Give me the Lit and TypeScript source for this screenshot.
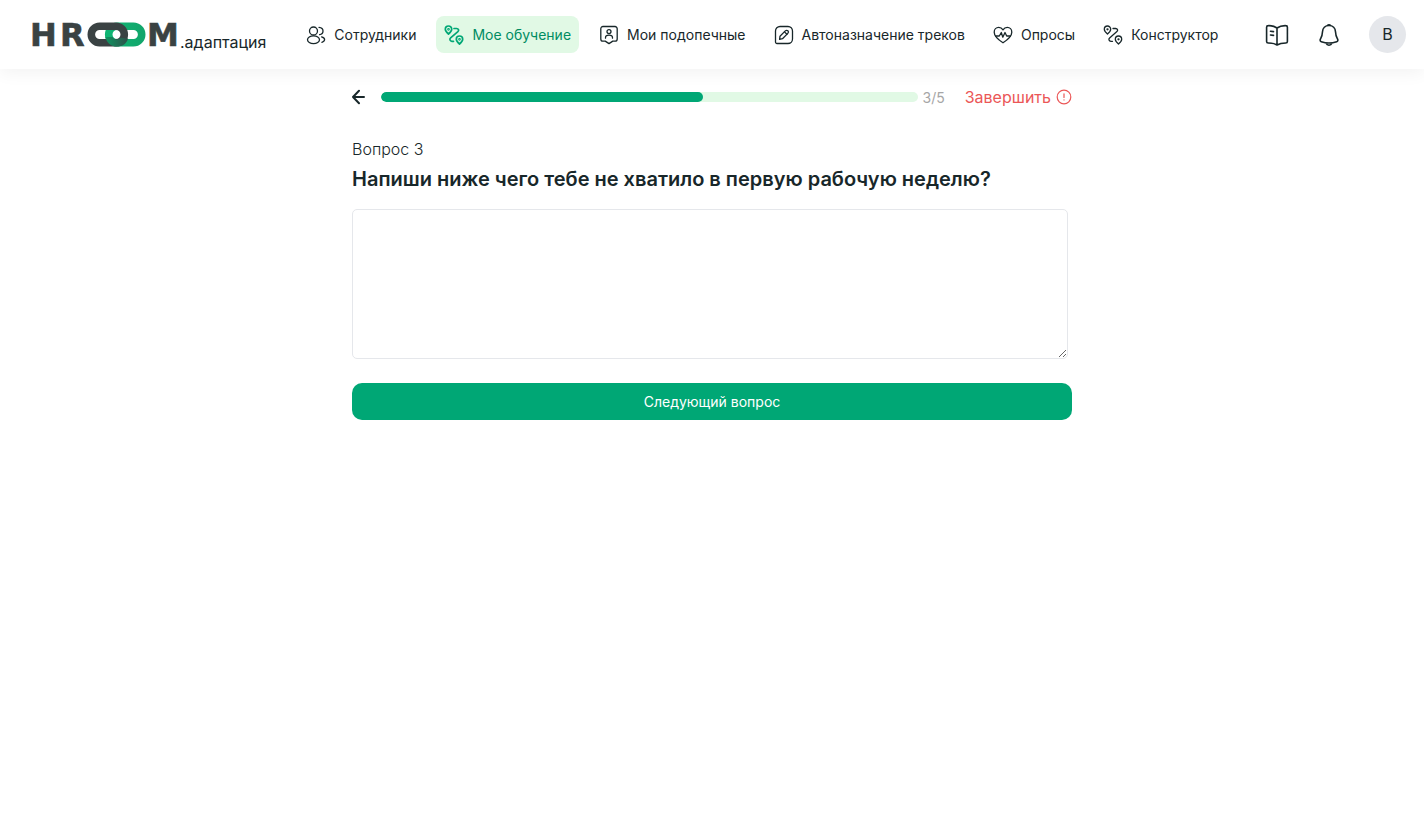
import { LitElement, html, css, svg, nothing } from "lit";
import { customElement, property, state } from "lit/decorators.js";
import { classMap } from "lit/directives/class-map.js";

const route = svg`
  <path d="M4.500 9C2.700 7.400 1.300 6.100 1.300 4.200a3.200 3.200 0 0 1 6.400 0C7.700 6.100 6.300 7.400 4.500 9Z"/>
  <circle cx="4.500" cy="4.300" r="0.500"/>
  <path d="M15.500 19c-1.800-1.600-3.200-2.900-3.200-4.800a3.200 3.200 0 0 1 6.400 0c0 1.900-1.400 3.200-3.200 4.800Z"/>
  <circle cx="15.500" cy="14.300" r="0.500"/>
  <path d="M10 3.500h2.600c1.900 0 2.700 1.900 1.300 3.100l-7.300 6.300c-1.400 1.200-.6 3.400 1.300 3.400h1.600"/>`;

const icons = {
  people: svg`
    <circle cx="7.500" cy="6" r="4"/>
    <ellipse cx="7.500" cy="14.700" rx="6" ry="3.900"/>
    <path d="M13 2.300c2.500.2 4 1.700 4 3.700s-1.400 3.400-3.400 3.600M15.600 11.800c1.900.5 3 1.500 3 2.800s-1 2.200-2.700 2.700"/>`,
  route,
  badge: svg`
    <path d="M4 1.500h12a2.200 2.200 0 0 1 2.200 2.200v10.200a2.200 2.200 0 0 1-2.200 2.200h-2.200L10 18.600l-3.800-2.500H4a2.200 2.200 0 0 1-2.200-2.200V3.700A2.200 2.200 0 0 1 4 1.500Z"/>
    <circle cx="10" cy="6.600" r="2"/>
    <path d="M6.500 13.200v-.5c0-1.500 1.500-2.500 3.500-2.500s3.500 1 3.500 2.500v.5"/>`,
  edit: svg`
    <path d="M6 1.500h8a4.500 4.500 0 0 1 4.500 4.500v8a4.500 4.500 0 0 1-4.500 4.500H3A1.500 1.500 0 0 1 1.500 17V6A4.500 4.500 0 0 1 6 1.500Z"/>
    <path d="m6 11.200 5.300-5.300c.8-.8 1.900-.8 2.600-.1s.7 1.800-.1 2.600L8.500 13.700l-2.900.6Z"/>
    <path d="m10.500 6.900 2.400 2.400"/>`,
  heart: svg`
    <path d="M10 17.800C7 15.800 1.200 11.700 1.200 7.200c0-2.800 2-4.800 4.500-4.800 1.800 0 3.300.9 4.300 2.500 1-1.600 2.500-2.500 4.300-2.500 2.500 0 4.500 2 4.500 4.800 0 4.500-5.800 8.600-8.800 10.600Z"/>
    <path d="M2.500 11h3.800L8.300 7.500l1.500 4.700 2.200-4.700 1.700 3.500h3.800"/>`,
};

type IconName = keyof typeof icons;

@customElement("hr-logo")
class HrLogo extends LitElement {
  static styles = css`
    :host { display: flex; align-items: flex-end; }
    .mark { display: block; width: 148px; height: 26px; overflow: visible; }
    .letters {
      font: 700 32px "DejaVu Sans", sans-serif;
      fill: #3a4243;
      stroke: #3a4243;
      stroke-width: 0.6;
    }
    .product {
      font: 400 16px/20px Inter, sans-serif;
      color: #18272a;
      margin-bottom: -4px;
    }
  `;
  render() {
    return html`
      <svg class="mark" viewBox="0 0 148 26" role="img" aria-label="HROOM">
        <defs>
          <linearGradient id="green" x1="0" x2="1">
            <stop offset="0" stop-color="#0fb573" />
            <stop offset="1" stop-color="#12a66c" />
          </linearGradient>
          <linearGradient id="overlap" x1="0" x2="1">
            <stop offset="0" stop-color="#0e9661" />
            <stop offset="1" stop-color="#2f4f49" />
          </linearGradient>
        </defs>
        <text class="letters" x="-2" y="24">H</text>
        <text class="letters" x="28" y="24">R</text>
        <text class="letters" x="115" y="24">M</text>
        <rect x="76.700" y="4.200" width="33" height="16.600" rx="8.300" fill="none" stroke="url(#green)" stroke-width="7.600" />
        <rect x="59.300" y="4.200" width="33" height="16.600" rx="8.300" fill="none" stroke="#3a4243" stroke-width="7.600" />
        <path d="M73.300 15c1.300 5.600 5.800 9.600 11.700 9.600 5.400 0 9.800-3.300 11.100-8.200l-7.500-.7c-.8 1.100-2.200 1.700-3.900 1.700-1.800 0-3.400-1-4-2.400Z" fill="url(#overlap)" />
      </svg>
      <span class="product">.адаптация</span>
    `;
  }
}

@customElement("nav-item")
class NavItem extends LitElement {
  @property() icon: IconName = "people";
  @property() label = "";
  @property({ type: Boolean }) active = false;
  static styles = css`
    :host { display: block; }
    .link {
      display: flex;
      align-items: center;
      gap: 8px;
      padding: 8px;
      border-radius: 8px;
      color: #18272a;
      font: 400 14px/21px Inter, sans-serif;
      text-decoration: none;
      white-space: nowrap;
    }
    .active { background: #e1f9e5; color: #008c62; }
    .icon {
      width: 20px;
      height: 20px;
      flex: none;
      fill: none;
      stroke: currentColor;
      stroke-width: 1.3;
      stroke-linecap: round;
      stroke-linejoin: round;
    }
    .active .icon { stroke: #00a775; stroke-width: 1.7; }
  `;
  render() {
    return html`
      <a
        class=${classMap({ link: true, active: this.active })}
        href="#"
        aria-current=${this.active ? "page" : nothing}
      >
        <svg class="icon" viewBox="0 0 20 20" aria-hidden="true">${icons[this.icon]}</svg>
        ${this.label}
      </a>
    `;
  }
}

@customElement("app-root")
class AppRoot extends LitElement {
  @state() current = 3;
  total = 5;
  nav: { icon: IconName; label: string; active?: boolean }[] = [
    { icon: "people", label: "Сотрудники" },
    { icon: "route", label: "Мое обучение", active: true },
    { icon: "badge", label: "Мои подопечные" },
    { icon: "edit", label: "Автоназначение треков" },
    { icon: "heart", label: "Опросы" },
    { icon: "route", label: "Конструктор" },
  ];

  static styles = css`
    :host {
      display: block;
      min-height: 100vh;
      background: #fff;
      color: #18272a;
      font-family: Inter, sans-serif;
    }
    * { box-sizing: border-box; }
    button { font-family: inherit; border: 0; background: none; padding: 0; color: inherit; cursor: pointer; }
    svg { display: block; fill: none; stroke: currentColor; stroke-linecap: round; stroke-linejoin: round; }
    .header {
      display: flex;
      align-items: center;
      padding: 16px 18px 16px 32px;
      box-shadow: 0 4px 16px rgba(0, 0, 0, 0.05);
    }
    .nav { display: flex; gap: 12px; margin-left: 32px; }
    .tools { display: flex; align-items: center; gap: 28px; margin-left: auto; }
    .tool svg { width: 24px; height: 24px; stroke-width: 1.6; }
    .avatar {
      width: 37px;
      height: 37px;
      border-radius: 50%;
      background: #e5e7eb;
      font-size: 16px;
      line-height: 37px;
    }
    .main { max-width: 720px; margin: 0 auto; padding-top: 16px; }
    .progress { display: flex; align-items: center; height: 24px; }
    .back { margin-right: 16px; }
    .back svg { width: 13px; height: 16px; stroke-width: 2; }
    .track { flex: 1; height: 10px; border-radius: 5px; background: #e1f9e5; overflow: hidden; }
    .fill { height: 100%; border-radius: 5px; background: #00a775; }
    .count { margin-left: 4px; font-size: 14px; color: #a6a6a6; }
    .finish {
      display: flex;
      align-items: center;
      gap: 5px;
      margin-left: 20px;
      font-size: 16px;
      line-height: 24px;
      color: #eb5757;
    }
    .finish svg { width: 16px; height: 16px; stroke-width: 1.2; }
    .step { margin: 28px 0 0; font-size: 16px; font-weight: 300; line-height: 24px; }
    .question { display: block; margin-top: 4px; font-size: 20px; font-weight: 600; line-height: 28px; }
    .answer {
      display: block;
      width: calc(100% - 4px);
      height: 150px;
      margin-top: 16px;
      padding: 8px;
      border: 1px solid #e5e7eb;
      border-radius: 5px;
      outline: none;
      background: #fff;
      font: 400 16px/24px Inter, sans-serif;
      resize: vertical;
    }
    .next {
      display: block;
      width: 100%;
      margin-top: 24px;
      padding: 8px;
      border-radius: 10px;
      background: #00a775;
      color: #fff;
      font-size: 14px;
      line-height: 21px;
    }
  `;

  render() {
    return html`
      <header class="header">
        <hr-logo></hr-logo>
        <nav class="nav">
          ${this.nav.map(
            (n) => html`<nav-item .icon=${n.icon} .label=${n.label} .active=${!!n.active}></nav-item>`
          )}
        </nav>
        <div class="tools">
          <button class="tool" aria-label="База знаний">
            <svg viewBox="0 0 24 24">
              <path d="M12 5C9.500 3.200 6.500 2.500 3.300 2.600c-1 0-1.700.7-1.700 1.600v14.300c0 .9.700 1.500 1.600 1.500 3.200 0 6.300.500 8.800 2 2.500-1.500 5.600-2 8.800-2 .9 0 1.600-.6 1.600-1.500V4.200c0-.9-.7-1.600-1.700-1.600C17.500 2.500 14.500 3.200 12 5Zm0 0v17M5.500 8.200l3 .4M5.500 12l3 .4" />
            </svg>
          </button>
          <button class="tool" aria-label="Уведомления">
            <svg viewBox="0 0 24 24">
              <path d="M12 2.500c-3.900 0-6.300 2.700-6.500 6.300-.2 3.400-.6 5-1.800 6.700-.9 1.300-.8 2.700.6 3.200 4.800 1.600 10.600 1.600 15.400 0 1.400-.5 1.500-1.900.6-3.200-1.200-1.700-1.600-3.300-1.800-6.700-.2-3.600-2.600-6.300-6.500-6.300ZM9 20.200c.6 1.300 1.700 2 3 2s2.400-.7 3-2M10.500 2.500c.6-.8 2.400-.8 3 0" />
            </svg>
          </button>
          <button class="avatar" aria-label="Профиль">В</button>
        </div>
      </header>
      <main class="main">
        <div class="progress">
          <button class="back" aria-label="Назад">
            <svg viewBox="0 0 13 16"><path d="M12 8H1M7 1.800 1 8l6 6.200" /></svg>
          </button>
          <div class="track" role="progressbar" aria-valuemin="0" aria-valuemax=${this.total} aria-valuenow=${this.current}>
            <div class="fill" style="width:${(this.current / this.total) * 100}%"></div>
          </div>
          <span class="count">${this.current}/${this.total}</span>
          <button class="finish">
            Завершить
            <svg viewBox="0 0 16 16"><circle cx="8" cy="8" r="6.800" /><path d="M8 4.800v3.700M8 10.800v.2" /></svg>
          </button>
        </div>
        <p class="step">Вопрос ${this.current}</p>
        <label class="question" for="answer">Напиши ниже чего тебе не хватило в первую рабочую неделю?</label>
        <textarea class="answer" id="answer"></textarea>
        <button class="next">Следующий вопрос</button>
      </main>
    `;
  }
}
